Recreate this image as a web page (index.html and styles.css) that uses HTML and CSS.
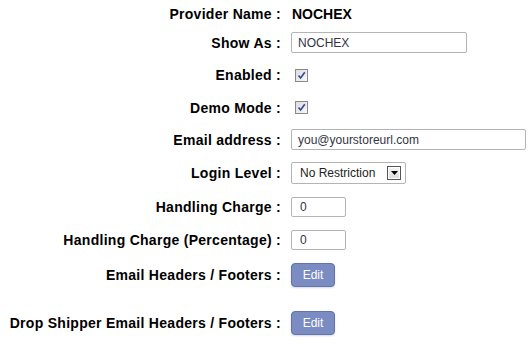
FILE: index.html
```html
<!DOCTYPE html>
<html>
<head>
<meta charset="utf-8">
<link rel="stylesheet" href="styles.css">
</head>
<body>
<div class="form">
  <div class="label">Provider Name :</div>
  <div class="value"><span class="strong">NOCHEX</span></div>

  <div class="label">Show As :</div>
  <div class="value"><div class="input wide">NOCHEX</div></div>

  <div class="label">Enabled :</div>
  <div class="value"><span class="check"><svg width="9" height="9" viewBox="0 0 9 9"><path d="M1.5 4.5 L3.6 7 L7.8 1.2" fill="none" stroke="#2c4a9e" stroke-width="1.6"/></svg></span></div>

  <div class="label">Demo Mode :</div>
  <div class="value"><span class="check"><svg width="9" height="9" viewBox="0 0 9 9"><path d="M1.5 4.5 L3.6 7 L7.8 1.2" fill="none" stroke="#2c4a9e" stroke-width="1.6"/></svg></span></div>

  <div class="label">Email address :</div>
  <div class="value"><div class="input email">you@yourstoreurl.com</div></div>

  <div class="label">Login Level :</div>
  <div class="value"><div class="select"><span>No Restriction</span><span class="arrow"><svg width="7" height="4" viewBox="0 0 7 4"><path d="M0 0 H7 L3.5 4 Z" fill="#000"/></svg></span></div></div>

  <div class="label">Handling Charge :</div>
  <div class="value"><div class="input small">0</div></div>

  <div class="label">Handling Charge (Percentage) :</div>
  <div class="value"><div class="input small">0</div></div>

  <div class="label">Email Headers / Footers :</div>
  <div class="value"><span class="btn">Edit</span></div>

  <div class="label">Drop Shipper Email Headers / Footers :</div>
  <div class="value"><span class="btn">Edit</span></div>
</div>
</body>
</html>
```

FILE: styles.css
```css
html, body {
  margin: 0;
  padding: 0;
  background: #fff;
}
body {
  font-family: "Liberation Sans", Arial, sans-serif;
  color: #000;
}
.form {
  display: grid;
  grid-template-columns: 281px 1fr;
  grid-template-rows: 27px 31px 34px 31px 33px 34px 34px 32px 38px 58px;
  column-gap: 10px;
  align-items: center;
}
.label {
  text-align: right;
  font-weight: bold;
  font-size: 14px;
  letter-spacing: 0.28px;
  white-space: nowrap;
}
.value {
  display: flex;
  align-items: center;
}
.strong {
  font-weight: bold;
  font-size: 14px;
  margin-left: 1px;
}
.input {
  box-sizing: border-box;
  height: 21px;
  border: 1px solid #b4b4b4;
  border-radius: 2px;
  font-size: 12px;
  color: #333344;
  padding: 0 0 0 6px;
  display: flex;
  align-items: center;
  background: #fff;
}
.input.wide { width: 176px; }
.input.email { width: 235px; }
.input.small { width: 55px; height: 20px; padding-left: 8px; }
.select {
  box-sizing: border-box;
  width: 115px;
  height: 22px;
  border: 1px solid #b4b4b4;
  border-radius: 2px;
  font-size: 12px;
  color: #222;
  display: flex;
  align-items: center;
  justify-content: space-between;
  padding: 0 4px 0 8px;
}
.arrow {
  box-sizing: border-box;
  width: 14px;
  height: 14px;
  border: 1px solid #555;
  background: linear-gradient(#f4f4f4, #dcdcdc);
  box-shadow: inset 0 0 0 1px #fff;
  display: flex;
  align-items: center;
  justify-content: center;
}
.check {
  box-sizing: border-box;
  width: 13px;
  height: 13px;
  margin-left: 4px;
  border: 1px solid #8a8a8a;
  background: linear-gradient(135deg, #dcdcdc, #f8f8f8);
  display: flex;
  align-items: center;
  justify-content: center;
}
.btn {
  box-sizing: border-box;
  width: 44px;
  height: 24px;
  margin-left: 0;
  border: 1px solid #6073b4;
  border-radius: 4px;
  background: #7b8cc3;
  color: #fff;
  font-size: 12px;
  display: flex;
  align-items: center;
  justify-content: center;
  box-shadow: 0 1px 2px rgba(0,0,0,0.15);
}
```
